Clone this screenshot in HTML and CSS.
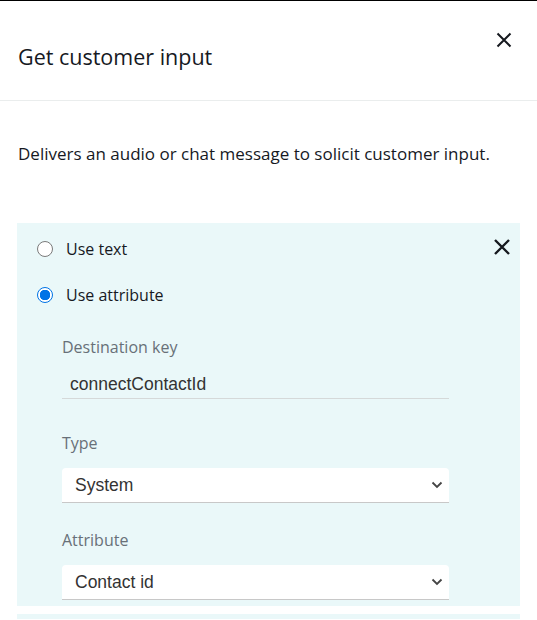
FILE: index.html
```html
<!DOCTYPE html>
<html>
<head>
<meta charset="utf-8">
<link rel="stylesheet" href="styles.css">
</head>
<body>
<div class="page">
  <header class="header">
    <h1 class="title">Get customer input</h1>
    <button class="close" aria-label="Close">
      <svg width="16" height="16" viewBox="0 0 16 16"><path d="M1.5 1.5 L14.5 14.5 M14.5 1.5 L1.5 14.5" stroke="#16191f" stroke-width="2" fill="none"/></svg>
    </button>
  </header>
  <p class="desc">Delivers an audio or chat message to solicit customer input.</p>
  <section class="panel">
    <button class="panel-close" aria-label="Remove">
      <svg width="18" height="18" viewBox="0 0 18 18"><path d="M2 2 L16 16 M16 2 L2 16" stroke="#16191f" stroke-width="2.4" fill="none"/></svg>
    </button>
    <div class="radio-row"><span class="radio"></span><span class="radio-label">Use text</span></div>
    <div class="radio-row"><span class="radio checked"></span><span class="radio-label">Use attribute</span></div>
    <div class="fields">
      <div class="field key">
        <div class="label">Destination key</div>
        <div class="text-input">connectContactId</div>
      </div>
      <div class="field">
        <div class="label">Type</div>
        <div class="select"><span>System</span>
          <svg width="12" height="8" viewBox="0 0 12 8"><path d="M1.5 1.5 L6 6 L10.5 1.5" stroke="#444" stroke-width="1.8" fill="none"/></svg>
        </div>
      </div>
      <div class="field">
        <div class="label">Attribute</div>
        <div class="select"><span>Contact id</span>
          <svg width="12" height="8" viewBox="0 0 12 8"><path d="M1.5 1.5 L6 6 L10.5 1.5" stroke="#444" stroke-width="1.8" fill="none"/></svg>
        </div>
      </div>
    </div>
  </section>
  <section class="panel next"></section>
</div>
</body>
</html>
```
FILE: styles.css
```css
html, body {
  margin: 0;
  padding: 0;
  background: #fff;
}
body {
  font-family: "Open Sans", "Noto Sans", sans-serif;
  color: #16191f;
  overflow: hidden;
}
.page {
  border-top: 1px solid #000;
}
.header {
  display: flex;
  justify-content: space-between;
  align-items: flex-start;
  height: 100px;
  padding: 0 18px;
  border-bottom: 1px solid #eaeded;
  box-sizing: border-box;
}
.title {
  margin: 42px 0 0;
  font-size: 21.5px;
  line-height: 28px;
  font-weight: 400;
}
.close {
  margin-top: 31px;
  margin-right: 7px;
  padding: 0;
  border: 0;
  background: none;
  width: 16px;
  height: 16px;
}
.close svg { display: block; }
.desc {
  margin: 41px 18px 0;
  font-size: 17px;
  line-height: 24px;
}
.panel {
  position: relative;
  margin: 57px 17px 0;
  background: #eaf8f9;
  padding: 14px 0 6px;
}
.panel.next {
  margin-top: 8px;
  height: 5px;
  padding: 0;
}
.panel-close {
  position: absolute;
  top: 15px;
  right: 9px;
  padding: 0;
  border: 0;
  background: none;
  width: 18px;
  height: 18px;
}
.panel-close svg { display: block; }
.radio-row {
  display: flex;
  align-items: center;
  height: 24px;
  padding-left: 20px;
  margin-bottom: 22px;
}
.radio {
  width: 16px;
  height: 16px;
  border: 1px solid #7a7a7a;
  border-radius: 50%;
  background: #fff;
  box-sizing: border-box;
  margin-right: 13px;
}
.radio.checked {
  border: 1.5px solid #0073e6;
  background: radial-gradient(circle, #0073e6 0 5px, #fff 5.5px);
}
.radio-label {
  font-size: 16px;
}
.fields {
  padding-left: 45px;
  width: 387px;
  margin-top: 29px;
}
.field {
  margin-bottom: 26px;
}
.field.key { margin-bottom: 33px; }
.field:last-child { margin-bottom: 0; }
.label {
  font-size: 16px;
  line-height: 22px;
  color: #687078;
  margin-bottom: 14px;
}
.text-input {
  font-family: "Liberation Sans", Arial, sans-serif;
  font-size: 17.5px;
  color: #333;
  height: 27px;
  line-height: 24px;
  padding-left: 8px;
  border-bottom: 1px solid #d5d9d9;
  box-sizing: border-box;
}
.select {
  display: flex;
  align-items: center;
  justify-content: space-between;
  background: #fff;
  border-radius: 4px 4px 0 0;
  border-bottom: 1.5px solid #c8c8c8;
  height: 35px;
  box-sizing: border-box;
  padding: 0 6px 0 13px;
  font-family: "Liberation Sans", Arial, sans-serif;
  font-size: 17.5px;
  color: #333;
}
.select svg { display: block; }
```
